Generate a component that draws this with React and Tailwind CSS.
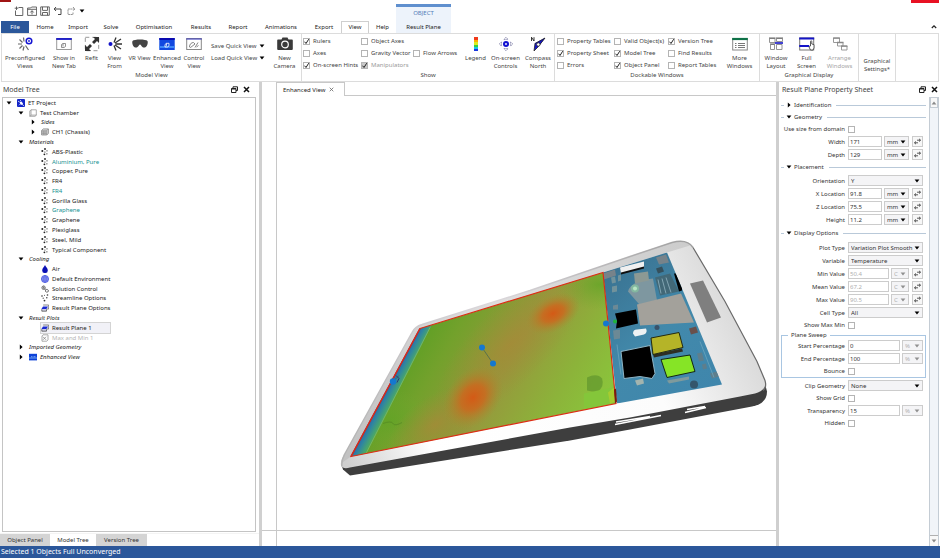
import clsx from 'clsx';

const RIBBON_TABS = [
  { name: 'Home', width: 'w-[32px]' },
  { name: 'Import', width: 'w-[34px]' },
  { name: 'Solve', width: 'w-[32px]' },
  { name: 'Optimisation', width: 'w-[54px]' },
  { name: 'Results', width: 'w-[40px]' },
  { name: 'Report', width: 'w-[34px]' },
  { name: 'Animations', width: 'w-[52px]' },
  { name: 'Export', width: 'w-[34px]' },
  { name: 'View', width: 'w-[28px]', active: true },
  { name: 'Help', width: 'w-[27px]' }
];

const SHOW_CHECKS = [
  [
    { name: 'Rulers', checked: true },
    { name: 'Axes' },
    { name: 'On-screen Hints', checked: true }
  ],
  [
    { name: 'Object Axes' },
    { name: 'Gravity Vector' },
    { name: 'Manipulators', checked: true, disabled: true }
  ],
  [null, { name: 'Flow Arrows' }, null]
];

const DOCK_CHECKS = [
  [
    { name: 'Property Tables' },
    { name: 'Property Sheet', checked: true },
    { name: 'Errors' }
  ],
  [
    { name: 'Valid Object(s)' },
    { name: 'Model Tree', checked: true },
    { name: 'Object Panel', checked: true }
  ],
  [
    { name: 'Version Tree', checked: true },
    { name: 'Find Results' },
    { name: 'Report Tables' }
  ]
];

const TREE = [
  { name: 'ET Project', level: 0, arrow: 'down', icon: 'project' },
  { name: 'Test Chamber', level: 1, arrow: 'down', icon: 'chamber' },
  { name: 'Sides', level: 2, arrow: 'right', italic: true },
  { name: 'CH1 (Chassis)', level: 2, arrow: 'right', icon: 'chassis' },
  { name: 'Materials', level: 1, arrow: 'down', italic: true },
  { name: 'ABS-Plastic', level: 2, icon: 'material' },
  { name: 'Aluminium, Pure', level: 2, icon: 'material', teal: true },
  { name: 'Copper, Pure', level: 2, icon: 'material' },
  { name: 'FR4', level: 2, icon: 'material' },
  { name: 'FR4', level: 2, icon: 'material', teal: true },
  { name: 'Gorilla Glass', level: 2, icon: 'material' },
  { name: 'Graphene', level: 2, icon: 'material', teal: true },
  { name: 'Graphene', level: 2, icon: 'material' },
  { name: 'Plexiglass', level: 2, icon: 'material' },
  { name: 'Steel, Mild', level: 2, icon: 'material' },
  { name: 'Typical Component', level: 2, icon: 'material' },
  { name: 'Cooling', level: 1, arrow: 'down', italic: true },
  { name: 'Air', level: 2, icon: 'drop' },
  { name: 'Default Environment', level: 2, icon: 'globe' },
  { name: 'Solution Control', level: 2, icon: 'gears' },
  { name: 'Streamline Options', level: 2, icon: 'stream' },
  { name: 'Result Plane Options', level: 2, icon: 'plane' },
  { name: 'Result Plots', level: 1, arrow: 'down', italic: true },
  { name: 'Result Plane 1', level: 2, icon: 'plane', selected: true },
  { name: 'Max and Min 1', level: 2, icon: 'maxmin', muted: true },
  { name: 'Imported Geometry', level: 1, arrow: 'right', italic: true },
  { name: 'Enhanced View', level: 1, arrow: 'right', icon: 'enhanced', italic: true }
];

const TREE_INDENT = ['pl-[3px]', 'pl-[15px]', 'pl-[27px]'];

/* ---------- icons ---------- */

function Caret({ dir = 'down', className }) {
  return (
    <svg viewBox="0 0 6 6" className={clsx('w-[6px] h-[6px] shrink-0', className)} fill="currentColor">
      {dir === 'down' ? <path d="M.6 1.500h4.800L3 4.400z" /> : <path d="M1.800.6v4.800L4.600 3z" />}
    </svg>
  );
}

function TreeIcon({ name }) {
  return (
    <svg viewBox="0 0 8 8" className="w-2 h-2 shrink-0" fill="none" strokeWidth=".7">
      {name === 'project' && (
        <>
          <rect width="8" height="8" rx="1" fill="#1426c8" />
          <path d="M2.600 3 4.500 2.600 6 4.500 5.500 6 3.500 5.500z" fill="#fff" />
          <path d="M1 2.200 2.600 3M5.500 5.800 7 6.800M2 6.200l1-1M3.500 1v1" stroke="#fff" />
        </>
      )}
      {name === 'chamber' && <path d="M2 .8h5.300v5.500L6 7.300H.8V2zM2 .8v5.300h5.300M2 6.100.8 7.300" stroke="#888" />}
      {name === 'chassis' && (
        <>
          <path d="M.6 2.500 2.300.9h5.100v4.400L5.800 7H.6z" fill="#ddd" stroke="#777" />
          <path d="M.6 2.700h5.200V7M5.800 2.700 7.400.9M.8 4h5M.8 5.400h5M2.300 2.700V7M4 2.700V7" stroke="#777" strokeWidth=".5" />
        </>
      )}
      {name === 'material' && (
        <g fill="#222">
          <circle cx="1.300" cy="3" r="1" /><circle cx="4" cy="1" r=".9" /><circle cx="3.900" cy="4" r=".6" />
          <circle cx="6" cy="2.800" r=".6" /><circle cx="3.400" cy="6.300" r=".9" /><circle cx="5.900" cy="5.800" r=".6" />
        </g>
      )}
      {name === 'drop' && <path d="M4 0c.6 2 2.800 3.200 2.800 5.200A2.700 2.700 0 0 1 4 8a2.700 2.700 0 0 1-2.800-2.800C1.200 3.200 3.400 2 4 0z" fill="#0a10b4" />}
      {name === 'globe' && (
        <>
          <circle cx="4" cy="4" r="3.600" fill="#98a2f4" stroke="#3a48dc" />
          <path d="M.5 4h7M4 .5v7M1 2.200h6M1 5.800h6M4 .5C1.700 2.500 1.700 5.500 4 7.500 6.300 5.500 6.300 2.500 4 .5" stroke="#3a48dc" strokeWidth=".4" />
        </>
      )}
      {name === 'gears' && (
        <g stroke="#333">
          <circle cx="2.600" cy="2.700" r="1.700" strokeWidth="1" strokeDasharray="1 .35" /><circle cx="2.600" cy="2.700" r=".6" />
          <circle cx="5.900" cy="5.800" r="1.400" strokeWidth="1" strokeDasharray="1 .35" /><path d="m3.500 4 1.300 1" />
        </g>
      )}
      {name === 'stream' && (
        <g fill="#333">
          <circle cx="1" cy="2" r=".8" /><circle cx="3.500" cy="1.200" r=".5" /><circle cx="6.500" cy="1" r=".8" />
          <circle cx="2.200" cy="4.200" r=".6" /><circle cx="5.800" cy="3.800" r=".7" /><circle cx="3.500" cy="6.600" r=".9" />
        </g>
      )}
      {name === 'plane' && (
        <>
          <path d="M2.200 1h5.500v4H6" stroke="#555" />
          <path d="M2 2.500h5L5.300 5.300H.3z" fill="#1a2ad2" />
          <path d="M.8 5.300v1.900h4.700V5.300" stroke="#444" fill="#ccd" />
        </>
      )}
      {name === 'maxmin' && (
        <>
          <path d="M2 .8h5v5L5.800 7.200H1V2z" stroke="#888" />
          <path d="m2 2.800 3 3M5 2.800l-3 3" stroke="#777" />
        </>
      )}
      {name === 'enhanced' && (
        <>
          <rect y=".8" width="8" height="6.600" fill="#0d42d8" />
          <path d="M0 5h8M2 3.700h1.500M4.500 3.700h2" stroke="#9fd0ff" />
        </>
      )}
    </svg>
  );
}

function RibbonIcon({ name }) {
  return (
    <svg viewBox="0 0 16 16" className="w-4 h-4 shrink-0" fill="none" stroke="#333" strokeWidth="1">
      {name === 'preconfigured' && (
        <>
          <path d="M1 8h4M2.500 3.500 5.500 6.500M6.500 1.500l.5 4M2.500 12.500l3-3M6 14.500l1-4M8.500 9.500l3 4.500" stroke="#666" strokeWidth="1.200" />
          <circle cx="12" cy="5" r="2.800" stroke="#1414d2" strokeWidth="1.500" />
          <circle cx="12" cy="5" r=".9" fill="#1414d2" stroke="none" />
        </>
      )}
      {name === 'tab' && (
        <>
          <rect x=".7" y="2.500" width="14.600" height="11" fill="#fff" stroke="#999" />
          <path d="M.2 3h15.600" stroke="#1414c8" strokeWidth="1.800" />
          <path d="M5.500 11.500V8.500l1.500-1h2.500v3l-1.500 1zM7 7.500v3" stroke="#777" strokeWidth=".8" />
        </>
      )}
      {name === 'refit' && (
        <>
          <rect x="1.300" y="1.300" width="13.400" height="13.400" stroke="#999" strokeDasharray="4 3" />
          <path d="M15 1v6l-2-2-3 3-2-2 3-3-2-2zM1 15V9l2 2 3-3 2 2-3 3 2 2z" fill="#333" stroke="none" />
        </>
      )}
      {name === 'from' && (
        <>
          <path d="M7 6.500 9 1.500M8 7l6-4M8.500 8H15M8 9l6 4M7 9.500l2 5" stroke="#333" strokeWidth="1.300" />
          <circle cx="3.500" cy="8" r="2" fill="#1414c8" stroke="none" />
        </>
      )}
      {name === 'vr' && <path d="M.5 5C2 3 14 3 15.500 5c.8 2-.3 6-2.500 6.500-2 .5-3.500-1-4-2.300-.5-.8-1.500-.8-2 0-.5 1.300-2 2.800-4 2.300C.8 11-.3 7 .5 5z" fill="#444" stroke="none" />}
      {name === 'enhanced' && (
        <>
          <rect x=".3" y="2" width="15.400" height="12" fill="#1148e0" stroke="none" />
          <path d="M.3 2h15.400v2H.3z" fill="#0a0ab0" stroke="none" />
          <path d="M.3 10h15.400v2H.3z" fill="#3d88f8" stroke="none" />
          <path d="M6 11V8.500l1.500-1.200H10v2.500L8.500 11zM7.500 7.300v2.500" stroke="#fff" strokeWidth=".8" />
        </>
      )}
      {name === 'control' && (
        <>
          <rect x=".7" y="2.500" width="14.600" height="11" stroke="#888" />
          <path d="M.2 3h15.600" stroke="#4a4ac0" strokeWidth="1.200" />
          <path d="M3.500 11c0-3 2-4.500 4-4.500L9 8l-4.500 3.500zM9 11.500l3-5M10.500 11l2-1.500" stroke="#777" strokeWidth=".9" />
        </>
      )}
      {name === 'camera' && (
        <>
          <path d="M1 3.500h3.500l1-2h5l1 2H15a1 1 0 0 1 .8 1V13a1 1 0 0 1-1 1H1.200a1 1 0 0 1-1-1V4.500a1 1 0 0 1 .8-1z" fill="#3a3a3a" stroke="none" />
          <circle cx="8" cy="8.500" r="3.300" stroke="#fff" strokeWidth="1.200" />
        </>
      )}
      {name === 'legend' && (
        <g stroke="none">
          <path d="M6 1h4v3H6z" fill="#f03a1a" /><path d="M6 4h4v2H6z" fill="#ffb000" /><path d="M6 6h4v3H6z" fill="#d8ee20" />
          <path d="M6 9h4v2H6z" fill="#30d048" /><path d="M6 11h4v2H6z" fill="#18c8e8" /><path d="M6 13h4v2H6z" fill="#1838e0" />
        </g>
      )}
      {name === 'controls' && (
        <>
          <circle cx="8" cy="8" r="3" fill="#1414d2" stroke="none" />
          <circle cx="8" cy="8" r=".9" fill="#fff" stroke="none" />
          <path d="M6 3.500 8 1l2 2.500zM6 12.500 8 15l2-2.500zM3.500 6 1 8l2.500 2zM12.500 6 15 8l-2.500 2z" stroke="#8080a8" strokeWidth=".8" strokeDasharray="1.500 .7" />
        </>
      )}
      {name === 'compass' && (
        <>
          <path d="M15 2 4.500 7.500 8 11z" fill="#1414c8" stroke="none" />
          <path d="M15 2 8 11l-4 4 1-7.500z" fill="#1414c8" stroke="#222" strokeWidth=".8" />
          <circle cx="8.300" cy="8.500" r="1.700" fill="#fff" stroke="#222" strokeWidth=".7" />
          <path d="M1.500 5V1.200L4 5V1.200" stroke="#222" strokeWidth=".9" />
        </>
      )}
      {name === 'more' && (
        <>
          <rect x=".7" y="2.500" width="14.600" height="11.500" stroke="#888" />
          <path d="M.2 3h15.600" stroke="#0e7248" strokeWidth="2.200" />
          <path d="M3 7.500h1.500M3 9.500h1.500M3 11.500h1.500M6 7.500h7M6 9.500h7M6 11.500h7" stroke="#555" strokeWidth=".8" />
        </>
      )}
      {name === 'layout' && (
        <>
          <path d="M1.500 2.500h5.500v4H1.500zM8.500 2.500h6v3h-6zM2.500 8.500h4v5h-4zM8.500 8.500h5.500v5H8.500z" stroke="#888" strokeWidth=".9" />
          <path d="M1 2h6.500M8 2h7M2 8h5" stroke="#666" />
          <path d="M7 7h8" stroke="#1414c8" strokeWidth="1.600" />
        </>
      )}
      {name === 'full' && (
        <>
          <rect x=".7" y="2" width="14" height="12" stroke="#777" />
          <path d="M.2 2.500h15M.2 10h10" stroke="#1414c8" strokeWidth="2" />
          <path d="M11.500 10V5.500c0-1 1.300-1 1.300 0V8l2.200.6V12l-1 2h-2.500l-1.500-3z" fill="#fff" stroke="#333" strokeWidth=".8" />
        </>
      )}
      {name === 'arrange' && (
        <>
          <path d="M1.500 2h6v4.500h-6zM5.500 6.500h5.500V10H5.500zM9.500 10H15v4H9.500z" fill="#fff" stroke="#999" />
          <path d="M1 2.200h7M5 6.500h6.500M9 10.200h6.500" stroke="#888" strokeWidth="1.300" />
        </>
      )}
    </svg>
  );
}

function QuickIcon({ name }) {
  return (
    <svg viewBox="0 0 10 10" className="w-[10px] h-[10px]" fill="none" stroke="#555" strokeWidth=".9">
      {name === 'new' && <path d="M4.500 1.500h4.300v8H1.500V4.500M2.500.5v3.500M.7 2.200h3.600" />}
      {name === 'open' && <path d="M.6 2h3l1-1h5v8.400h-9zM.6 3.300h9M5 8.500V5M3.300 6.500 5 4.600l1.700 1.900" />}
      {name === 'save' && <path d="M.7.9h8.600v8.400H.7zM2.500.9v3.500h5V.9M2.500 9.300V6.500h5v2.800" />}
      {name === 'undo' && <path d="M3 1 1.200 3l1.800 2M1.200 3H8v5.500H5" stroke="#333" />}
      {name === 'redo' && <path d="m7 1 1.800 2L7 5M8.800 3H2v5.500h5V6.500" stroke="#888" strokeDasharray="2 .5" />}
    </svg>
  );
}

function DockButtons() {
  return (
    <div className="flex items-center gap-[5px]">
      <button aria-label="Float panel">
        <svg viewBox="0 0 7 7" className="w-[7px] h-[7px]" fill="none" stroke="#222">
          <path d="M2 2V.8h4.500v3.700H5M.5 2.500H5v4H.5zM.5 3H5" />
        </svg>
      </button>
      <button aria-label="Close panel">
        <svg viewBox="0 0 7 7" className="w-[7px] h-[7px]" fill="none" stroke="#111" strokeWidth="1.500">
          <path d="m1 1 5 5M6 1 1 6" />
        </svg>
      </button>
    </div>
  );
}

/* ---------- small controls ---------- */

function Tick({ checked, disabled, id, label }) {
  return (
    <span className="relative flex w-[7px] h-[7px] shrink-0">
      <input
        type="checkbox"
        id={id}
        aria-label={label}
        defaultChecked={checked}
        disabled={disabled}
        className="peer appearance-none w-[7px] h-[7px] border border-[#b4b4b4] bg-white disabled:bg-[#c9c9c9]"
      />
      <svg viewBox="0 0 7 7" className="absolute inset-0 w-[7px] h-[7px] hidden peer-checked:block pointer-events-none" fill="none" stroke="#222">
        <path d="m1.500 3.700 1.500 1.800 2.700-4.300" />
      </svg>
    </span>
  );
}

function CheckColumn({ items, className }) {
  return (
    <div className={clsx('flex flex-col pt-px', className)}>
      {items.map((item, i) => (
        item ? (
          <label key={i} className={clsx('flex items-center gap-[3px] h-3 whitespace-nowrap', item.disabled && 'text-[#999999]')}>
            <Tick checked={item.checked} disabled={item.disabled} />
            {item.name}
          </label>
        ) : <div key={i} className="h-3" />
      ))}
    </div>
  );
}

function BigButton({ icon, lines, className, muted }) {
  return (
    <button className={clsx('flex flex-col items-center pt-[2px] gap-[2px] whitespace-nowrap', className, muted && 'text-[#a5a5a5]')}>
      <RibbonIcon name={icon} />
      <span className="text-center">
        {lines.map((line) => <span key={line} className="block">{line}</span>)}
      </span>
    </button>
  );
}

function Group({ title, children }) {
  return (
    <section className="flex flex-col border-r border-[#dcdcdc]">
      <div className="flex flex-1">{children}</div>
      <h2 className="h-[10px] text-center">{title}</h2>
    </section>
  );
}

/* ---------- header and ribbon ---------- */

function Header() {
  return (
    <header className="bg-white">
      <div className="flex h-[21px]">
        <div className="w-[396px] flex flex-col">
          <div className="h-[2px] w-[11px] bg-[#a01414]" />
          <div className="flex items-center gap-[3px] pl-[14px] pt-[4px]">
            {['new', 'open', 'save', 'undo', 'redo'].map((name) => (
              <button key={name} aria-label={name}><QuickIcon name={name} /></button>
            ))}
            <button aria-label="Customise toolbar"><Caret className="text-black" /></button>
          </div>
        </div>
        <div className="w-[55px] pt-1 flex">
          <div className="flex-1 bg-[#edf3fb] border-t-[3px] border-[#5f8fce] text-center text-[#5580b8] leading-[13px]">
            OBJECT
          </div>
        </div>
        <div className="ml-auto mr-px w-7 h-[3px] bg-[#e81123]" />
      </div>
      <nav className="flex h-3 items-stretch text-[#222222]">
        <button className="w-7 ml-px bg-[#2b579a] text-white">File</button>
        {RIBBON_TABS.map((tab) => (
          <button key={tab.name} className={clsx(tab.width, tab.active && 'border border-b-0 pb-px border-[#cfcfcf] bg-white')}>
            {tab.name}
          </button>
        ))}
        <button className="w-[55px] bg-[#edf3fb]">Result Plane</button>
        <button aria-label="Collapse ribbon" className="ml-auto mr-[3px]">
          <svg viewBox="0 0 6 6" className="w-[6px] h-[6px]" fill="none" stroke="#222" strokeWidth="1.200"><path d="M.8 4 3 1.800 5.200 4" /></svg>
        </button>
      </nav>
    </header>
  );
}

function Ribbon() {
  return (
    <div className="flex h-[49px] border-y border-l border-[#dcdcdc] text-[#444444] mx-px overflow-hidden">
      <Group title="Model View">
        <BigButton icon="preconfigured" lines={['Preconfigured', 'Views']} className="w-[46px]" />
        <BigButton icon="tab" lines={['Show in', 'New Tab']} className="w-[32px]" />
        <BigButton icon="refit" lines={['Refit']} className="w-[23px]" />
        <BigButton icon="from" lines={['View', 'From']} className="w-[23px]" />
        <BigButton icon="vr" lines={['VR View']} className="w-[27px]" />
        <BigButton icon="enhanced" lines={['Enhanced', 'View']} className="w-[28px]" />
        <BigButton icon="control" lines={['Control', 'View']} className="w-[26px]" />
        <div className="w-[61px] flex flex-col pt-[6px] pl-1">
          {['Save Quick View', 'Load Quick View'].map((name) => (
            <button key={name} className="h-3 flex items-center justify-between pr-[3px] whitespace-nowrap">
              {name}
              <Caret className="text-black" />
            </button>
          ))}
        </div>
        <BigButton icon="camera" lines={['New', 'Camera']} className="w-[33px]" />
      </Group>
      <Group title="Show">
        <CheckColumn items={SHOW_CHECKS[0]} className="w-[59px] pl-px" />
        <CheckColumn items={SHOW_CHECKS[1]} className="w-[52px]" />
        <CheckColumn items={SHOW_CHECKS[2]} className="w-[49px]" />
        <BigButton icon="legend" lines={['Legend']} className="w-[27px]" />
        <BigButton icon="controls" lines={['On-screen', 'Controls']} className="w-[33px]" />
        <BigButton icon="compass" lines={['Compass', 'North']} className="w-[32px]" />
      </Group>
      <Group title="Dockable Windows">
        <CheckColumn items={DOCK_CHECKS[0]} className="w-[59px] pl-[2px]" />
        <CheckColumn items={DOCK_CHECKS[1]} className="w-[54px]" />
        <CheckColumn items={DOCK_CHECKS[2]} className="w-[52px]" />
        <BigButton icon="more" lines={['More', 'Windows']} className="w-[39px]" />
      </Group>
      <Group title="Graphical Display">
        <BigButton icon="layout" lines={['Window', 'Layout']} className="w-[32px]" />
        <BigButton icon="full" lines={['Full', 'Screen']} className="w-[29px]" />
        <BigButton icon="arrange" lines={['Arrange', 'Windows']} className="w-[37px]" muted />
      </Group>
      <button className="w-[37px] pt-[14px] border-r border-[#dcdcdc]">Graphical Settings*</button>
      <div className="flex-1 border-r border-[#dcdcdc]" />
    </div>
  );
}

/* ---------- model tree ---------- */

function ModelTree() {
  return (
    <aside className="w-[259px] shrink-0 flex flex-col">
      <div className="flex items-center justify-between h-[15px] pl-[3px] pr-[9px]">
        <h2 className="text-[7px] text-[#444444]">Model Tree</h2>
        <DockButtons />
      </div>
      <div className="flex-1 ml-[2px] mr-[3px] border border-[#c4c4c4] bg-white">
        <ul className="grid auto-rows-fr h-[264px] text-[#222222]">
          {TREE.map((node, i) => (
            <li key={i} className={clsx('flex items-center', TREE_INDENT[node.level])}>
              {node.arrow ? <Caret dir={node.arrow} className="text-black" /> : <span className="w-[6px]" />}
              <span
                className={clsx(
                  'flex items-center gap-[3px] h-full ml-[5px] whitespace-nowrap',
                  node.selected && 'bg-[#f1f1f7] outline outline-[#d4d4d4] w-[69px]',
                  node.italic && 'italic',
                  node.teal && 'text-[#159191]',
                  node.muted && 'text-[#b5b5b5]'
                )}
              >
                {node.icon && <TreeIcon name={node.icon} />}
                {node.name}
              </span>
            </li>
          ))}
        </ul>
      </div>
      <nav className="flex h-[13px] mt-px pt-px bg-[#f4f4f4] text-[#333333]">
        <button className="w-[50px] bg-[#d4d4d4]">Object Panel</button>
        <button className="w-[46px] bg-white">Model Tree</button>
        <button className="w-[51px] bg-[#d4d4d4]">Version Tree</button>
        <span className="flex-1 bg-white" />
      </nav>
    </aside>
  );
}

/* ---------- 3D view ---------- */

function Tablet() {
  return (
    <svg viewBox="277 97 499 433" className="w-full h-full" role="img" aria-label="Tablet with temperature result plane">
      <defs>
        <linearGradient id="frame" x1="345" y1="460" x2="720" y2="280" gradientUnits="userSpaceOnUse">
          <stop offset="0" stopColor="#cfcfcf" />
          <stop offset=".2" stopColor="#ffffff" />
          <stop offset=".75" stopColor="#fcfcfc" />
          <stop offset="1" stopColor="#dadada" />
        </linearGradient>
        <linearGradient id="topEdge" x1="350" y1="450" x2="690" y2="243" gradientUnits="userSpaceOnUse">
          <stop offset="0" stopColor="#b4b4b4" />
          <stop offset=".5" stopColor="#dcd8dc" />
          <stop offset="1" stopColor="#a0a0a0" />
        </linearGradient>
        <linearGradient id="rim" x1="350" y1="450" x2="690" y2="243" gradientUnits="userSpaceOnUse">
          <stop offset="0" stopColor="#c2c2c2" />
          <stop offset=".5" stopColor="#dedede" />
          <stop offset="1" stopColor="#cccccc" />
        </linearGradient>
        <linearGradient id="field" x1="405" y1="335" x2="590" y2="445" gradientUnits="userSpaceOnUse">
          <stop offset="0" stopColor="#579f22" />
          <stop offset=".2" stopColor="#73a12c" />
          <stop offset=".48" stopColor="#96983c" />
          <stop offset=".75" stopColor="#8cb33a" />
          <stop offset="1" stopColor="#8ac83c" />
        </linearGradient>
        <linearGradient id="cold" x1="384" y1="389" x2="399" y2="397" gradientUnits="userSpaceOnUse">
          <stop offset="0" stopColor="#2f58a8" />
          <stop offset=".4" stopColor="#2f86a0" />
          <stop offset=".75" stopColor="#48a56c" />
          <stop offset="1" stopColor="#62a82c" />
        </linearGradient>
        <radialGradient id="hot">
          <stop offset="0" stopColor="#d45a16" />
          <stop offset=".4" stopColor="#cc681e" stopOpacity=".85" />
          <stop offset="1" stopColor="#a88a30" stopOpacity="0" />
        </radialGradient>
        <radialGradient id="warm">
          <stop offset="0" stopColor="#a88838" stopOpacity=".75" />
          <stop offset="1" stopColor="#a08c38" stopOpacity="0" />
        </radialGradient>
        <radialGradient id="cool">
          <stop offset="0" stopColor="#62a426" stopOpacity=".75" />
          <stop offset="1" stopColor="#70a82e" stopOpacity="0" />
        </radialGradient>
        <linearGradient id="pcb" x1="610" y1="270" x2="715" y2="390" gradientUnits="userSpaceOnUse">
          <stop offset="0" stopColor="#3a7392" />
          <stop offset=".5" stopColor="#4289ab" />
          <stop offset="1" stopColor="#3f86ac" />
        </linearGradient>
        <clipPath id="planeClip"><path d="M420 329 603 273 616 404 351 457z" /></clipPath>
        <clipPath id="pcbClip"><path d="M603 273 667 253 722 385 617 404z" /></clipPath>
      </defs>

      {/* case */}
      <path d="M341 464 343 470 350 476 570 441 630 430 752 407Q767 404 767 392L765 384 500 400z" fill="#3e3e3e" />
      <path d="M341 466 C340 461 343 458 345 454L412 333Q415 327 422 325L530 291 630 257 672 243Q687 239 693 248L725 302 757 362 765 381Q768 390 755 394L740 397 630 418 570 428 350 468Q343 470 341 466z" fill="url(#frame)" />
      <path d="M341 464C341 461 343 458 345 454L412 333Q415 327 422 325L530 291 630 257 672 243Q684 240 690 246L667 253 603 273 420 329 351 457z" fill="url(#rim)" />
      <path d="M342 467 C341 461 343 458 345 454L412 333Q415 327 422 325L530 291 630 257 672 243Q687 239 693 248" fill="none" stroke="url(#topEdge)" strokeWidth="1.500" />
      <path d="M693 248 725 302 757 362 765 381Q767 388 763 391" fill="none" stroke="#6a6a6a" strokeWidth="1.200" />
      <path d="M615 425 661 416M616 422.500 650 417M685 413 706 408M687 410 705 407" stroke="#ffffff" strokeWidth="1.500" />
      <path d="M690 284 703 281 721 318 707 323z" fill="#7f7f7f" />

      {/* circuit board */}
      <g clipPath="url(#pcbClip)">
        <path d="M600 250h130v160H600z" fill="url(#pcb)" />
        <path d="M656 258l10-3 3 8-10 2zM603 274l12-4 1 6-12 4z" fill="#77838a" />
        <path d="M628 292Q630 282 653 279L657 301 642 308z" fill="#7e97a0" />
        <path d="M634 274l14-2 1 9-14 3z" fill="#8c9994" />
        <path d="M611 278l4-1 1 6-4 1zM612 287l5-1v6l-5 1zM618 276l3-1v6l-3 1z" fill="#71929b" />
        <path d="M655 278l15-4 9 18-19 4z" fill="#426877" />
        <path d="M658 280l3 14M662 279l4 15M666 278l5 15" stroke="#82a5b3" strokeWidth="1" />
        <path d="M656 269l6-2 2 5-6 2z" fill="#35505c" />
        <path d="M637 305 681 294 694 323 640 326z" fill="#a3a19b" />
        <circle cx="635" cy="289" r="4" fill="#83b8a0" /><circle cx="635" cy="289" r="2" fill="#b8e4c4" />
        <path d="M620 268l24-6v6l-23 6z" fill="#f0f0f0" /><path d="M621 273l23-6v2l-23 6z" fill="#101010" />
        <path d="M674 274l2 0 6 12v5l-3 1z" fill="#000" />
        <path d="M615 314 636 310 638 324 616 329 617 321z" fill="#000" />
        <path d="M613 331l7-1v9l-6 1zM613 310h5v-5l-5 1z" fill="#6c8995" />
        <path d="M633 334q0-4 4-4l9-1q2 4-2 6l-9 2z" fill="#eef2f3" />
        <circle cx="657" cy="328" r="2.500" fill="#39526a" />
        <path d="M689 329l7-2 2 6-7 2z" fill="#69504c" />
        <path d="M621 352 650 346 655 374 652 379 646 378 640 377 624 379z" fill="#000" stroke="#8fb4c4" strokeWidth="1" />
        <path d="M653 355l29-6 1 3-29 6z" fill="#2e2e22" />
        <path d="M651 338.500 679 333 683 348 653 355z" fill="#b5b428" stroke="#242a10" strokeWidth="1" />
        <path d="M661 360 690 355.500 695 372 667 378z" fill="#86e426" stroke="#142414" strokeWidth="1" />
        <path d="M635 381l8-2 1 5-7 2z" fill="#a4b4ae" />
        <path d="M667 381l22-4v3l-20 4z" fill="#7f9a9c" />
        <circle cx="694" cy="385" r="4" fill="#34566c" />
        <path d="M697 354l5-1 2 8-5 1zM710 374l7-2 2 5-7 2zM702 365l4-1 1 5-4 1z" fill="#5e7e8c" />
        <path d="M617 345l4 30M700 342l14 36" stroke="#6ba5bd" strokeWidth=".8" />
      </g>

      {/* result plane */}
      <g clipPath="url(#planeClip)">
        <path d="M340 260h290v210H340z" fill="url(#field)" />
        <ellipse cx="600" cy="285" rx="45" ry="26" fill="url(#cool)" />
        <ellipse cx="390" cy="420" rx="46" ry="30" fill="url(#cool)" />
        <ellipse cx="510" cy="345" rx="100" ry="38" transform="rotate(-45 510 345)" fill="url(#warm)" />
        <ellipse cx="435" cy="425" rx="56" ry="28" transform="rotate(-35 435 425)" fill="url(#warm)" />
        <ellipse cx="553" cy="314" rx="29" ry="18" transform="rotate(-28 553 314)" fill="url(#hot)" />
        <ellipse cx="473" cy="398" rx="35" ry="26" transform="rotate(-50 473 398)" fill="url(#hot)" />
        <path d="M420 329 432 325 366 455 351 458z" fill="url(#cold)" />
        <path d="M430 328 366 454" stroke="#8fc06a" strokeOpacity=".6" />
        <path d="M587 378q10-5 15 1 3 8-5 14l-10-2z" fill="#5a8f2c" fillOpacity=".6" />
        <path d="M584 394l28-6 4 16-32 6z" fill="#84c63a" />
        <path d="M608 393l6-5 2 14-6 2z" fill="#a6cc30" />
        <path d="M383 424q8-3 10 0t9-1" fill="none" stroke="#4f8224" strokeWidth=".8" strokeOpacity=".7" />
      </g>
      <path d="M351 457 420 329" stroke="#8a2458" strokeWidth="1.500" />
      <path d="M420 329 603 273 616 404 351 457z" fill="none" stroke="#dd2c14" strokeWidth="1.200" />
      <path d="M614 390l2-1 1 13-2 2z" fill="#7a1c10" />

      {/* manipulators */}
      <path d="m482 348 11 16M393 382l6-6" stroke="#4a6a50" strokeWidth=".8" />
      <g fill="#1478d0">
        <circle cx="482" cy="348" r="3" /><circle cx="493" cy="364" r="3" />
        <circle cx="606" cy="324" r="3" /><circle cx="393" cy="382" r="3.200" />
      </g>
      <path d="m396 376 3 3-2 4" stroke="#2a3a7a" fill="none" />
      <circle cx="615" cy="322" r="2" fill="#1fb43a" />
    </svg>
  );
}

function Viewport() {
  return (
    <main className="flex-1 min-w-0 flex flex-col border-l-[3px] border-[#d0d0d0] bg-white">
      <div className="flex-1 flex border-b border-[#c8c8c8]">
        <div className="w-[15px] border-r border-[#c8c8c8]" />
        <div className="flex-1 min-w-0 flex flex-col">
          <div className="flex h-[14px] shrink-0">
            <div className="w-[68px] flex items-center gap-1 pl-[6px] border-r border-t border-[#c8c8c8] text-[#222222] whitespace-nowrap">
              Enhanced View
              <button aria-label="Close Enhanced View">
                <svg viewBox="0 0 5 5" className="w-[5px] h-[5px]" stroke="#666" strokeWidth=".8"><path d="m.7.7 3.600 3.600M4.300.7.7 4.300" /></svg>
              </button>
            </div>
            <div className="flex-1 border-b border-[#c8c8c8]" />
          </div>
          <div className="flex-1 min-h-0">
            <Tablet />
          </div>
        </div>
      </div>
      <div className="h-[15px] shrink-0 flex"><div className="w-[15px] border-r border-[#c8c8c8]" /></div>
    </main>
  );
}

/* ---------- property sheet ---------- */

function Heading({ title, closed }) {
  return (
    <h3 className="flex items-center gap-[2px] h-3">
      <span className="w-[3px] h-px bg-[#b9c9d9]" />
      <Caret dir={closed ? 'right' : 'down'} className="text-black" />
      {title}
      <span className="flex-1 h-px bg-[#b9c9d9] ml-[3px]" />
    </h3>
  );
}

function Dropdown({ value, label, disabled, className }) {
  return (
    <span className={clsx('relative flex h-[11px]', className)}>
      <select
        aria-label={label}
        disabled={disabled}
        className="appearance-none w-full h-full pl-[2px] pt-px leading-[8px] border border-[#cccccc] bg-[#f4f4f6] opacity-100 disabled:text-[#b0b0b0]"
      >
        <option>{value}</option>
      </select>
      <Caret className={clsx('absolute right-[3px] top-[3px] pointer-events-none', disabled ? 'text-[#909090]' : 'text-black')} />
    </span>
  );
}

function Row({ label, inset, value, unit, unitWidth, swap, disabled, unitDisabled, select, check }) {
  const id = label.toLowerCase().replaceAll(' ', '-');
  return (
    <div className={clsx('flex items-center gap-[3px]', check ? 'h-3' : 'h-[13px]')}>
      <label htmlFor={select ? undefined : id} className={clsx('text-right whitespace-nowrap shrink-0', inset ? 'w-[60px]' : 'w-[64px]')}>{label}</label>
      {check && <Tick id={id} />}
      {select && <Dropdown value={value} label={label} className="flex-1" />}
      {unit && (
        <div className="flex-1 min-w-0 flex gap-[2px]">
          <input
            id={id}
            defaultValue={value}
            disabled={disabled}
            className="flex-1 min-w-0 h-[11px] px-px border border-[#cccccc] bg-white disabled:text-[#b0b0b0]"
          />
          <Dropdown value={unit} label={`${label} unit`} disabled={disabled || unitDisabled} className={unitWidth} />
          {swap && (
            <button aria-label={`Convert ${label}`} className="w-[11px] h-[11px] ml-px border border-[#cccccc] bg-[#f7f7f7] flex items-center justify-center">
              <svg viewBox="0 0 7 7" className="w-[7px] h-[7px]" fill="none" stroke="#333" strokeWidth=".8">
                <path d="M3 2.200h3.500L5 .8M6.500 2.200 5 3.600M4 4.800H.5L2 3.400M.5 4.800 2 6.200" />
              </svg>
            </button>
          )}
        </div>
      )}
    </div>
  );
}

function PropertySheet() {
  return (
    <aside className="w-[164px] shrink-0 flex flex-col border-l-[3px] border-[#cfcfcf] text-[#333333]">
      <div className="flex items-center justify-between h-[15px] pl-[3px] pr-[2px]">
        <h2 className="text-[7px] text-[#444444]">Result Plane Property Sheet</h2>
        <DockButtons />
      </div>
      <div className="flex flex-1">
        <div className="flex-1 min-w-0 pl-[2px] pr-[3px] pt-[2px]">
          <Heading title="Identification" closed />
          <Heading title="Geometry" />
          <div className="pr-[3px]">
            <Row label="Use size from domain" check />
            <Row label="Width" value="171" unit="mm" unitWidth="w-[25px]" swap />
            <Row label="Depth" value="129" unit="mm" unitWidth="w-[25px]" swap />
          </div>
          <Heading title="Placement" />
          <div className="pr-[3px] py-px">
            <Row label="Orientation" value="Y" select />
            <Row label="X Location" value="91.8" unit="mm" unitWidth="w-[25px]" swap />
            <Row label="Z Location" value="75.5" unit="mm" unitWidth="w-[25px]" swap />
            <Row label="Height" value="11.2" unit="mm" unitWidth="w-[25px]" swap />
          </div>
          <Heading title="Display Options" />
          <div className="pr-[3px] pt-[2px]">
            <Row label="Plot Type" value="Variation Plot Smooth" select />
            <Row label="Variable" value="Temperature" select />
            <Row label="Min Value" value="50.4" unit="C" unitWidth="w-[18px]" swap disabled />
            <Row label="Mean Value" value="67.2" unit="C" unitWidth="w-[18px]" swap disabled />
            <Row label="Max Value" value="90.5" unit="C" unitWidth="w-[18px]" swap disabled />
            <Row label="Cell Type" value="All" select />
            <Row label="Show Max Min" check />
          </div>
          <fieldset className="min-w-0 border border-[#a9c6e2] pl-[3px] pr-[2px]">
            <legend className="ml-[3px] px-[3px] leading-[8px]">Plane Sweep</legend>
            <Row label="Start Percentage" value="0" unit="%" unitWidth="w-[21px]" unitDisabled inset />
            <Row label="End Percentage" value="100" unit="%" unitWidth="w-[21px]" unitDisabled inset />
            <Row label="Bounce" check inset />
          </fieldset>
          <div className="pr-[3px] pt-px">
            <Row label="Clip Geometry" value="None" select />
            <Row label="Show Grid" check />
            <Row label="Transparency" value="15" unit="%" unitWidth="w-[21px]" unitDisabled />
            <Row label="Hidden" check />
          </div>
        </div>
        <div className="w-[10px] mr-px flex flex-col justify-between border-x border-[#c4ccd4] bg-[#f1f4f8]">
          <button aria-label="Scroll up" className="h-[11px] border border-[#c4ccd4] bg-[#f8f8f8] flex items-center justify-center">
            <Caret className="rotate-180 text-[#888888]" />
          </button>
          <button aria-label="Scroll down" className="h-[11px] border-t border-[#b0b0b0] bg-[#f8f8f8] flex items-center justify-center">
            <Caret className="text-[#888888]" />
          </button>
        </div>
      </div>
    </aside>
  );
}

function App() {
  return (
    <div className="min-h-screen flex flex-col bg-white font-['Noto_Sans',sans-serif] text-[6px] leading-[8px]">
      <Header />
      <Ribbon />
      <div className="flex-1 flex">
        <ModelTree />
        <Viewport />
        <PropertySheet />
      </div>
      <footer className="h-3 px-px bg-[#2b579a] text-white text-[7px] leading-[12px]">
        Selected 1 Objects Full Unconverged
      </footer>
    </div>
  );
}

export default App;
